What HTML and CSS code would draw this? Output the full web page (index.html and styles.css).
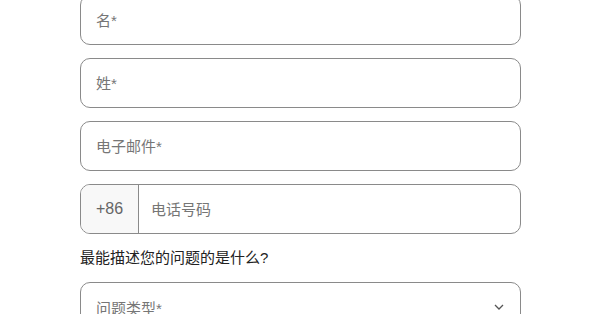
FILE: index.html
```html
<!DOCTYPE html>
<html lang="zh">
<head>
<meta charset="utf-8">
<link rel="stylesheet" href="styles.css">
</head>
<body>
<form class="form">
  <input class="field" type="text" placeholder="名*">
  <input class="field" type="text" placeholder="姓*">
  <input class="field" type="email" placeholder="电子邮件*">
  <div class="phone">
    <span class="prefix">+86</span>
    <input class="phone-input" type="tel" placeholder="电话号码">
  </div>
  <label class="question">最能描述您的问题的是什么?</label>
  <div class="select">
    <span class="select-text">问题类型*</span>
    <svg class="chevron" width="10" height="6" viewBox="0 0 10 6"><path d="M1 1l4 4 4-4" fill="none" stroke="#555" stroke-width="1.3"/></svg>
  </div>
</form>
</body>
</html>
```

FILE: styles.css
```css
html, body {
  margin: 0;
  padding: 0;
  background: #fff;
  overflow: hidden;
}
body {
  font-family: "Liberation Sans", "Noto Sans CJK SC", sans-serif;
  font-size: 15px;
  color: #222;
}
.form {
  width: 441px;
  margin: -5px 0 0 80px;
  display: flex;
  flex-direction: column;
  gap: 13px;
}
.field, .phone, .select {
  box-sizing: border-box;
  height: 50px;
  border: 1px solid #8a8a8a;
  border-radius: 10px;
  background: #fff;
}
.field {
  padding: 0 15px;
  font: inherit;
  color: #222;
  outline: none;
}
.field::placeholder, .phone-input::placeholder {
  color: #767676;
  opacity: 1;
}
.phone {
  display: flex;
  overflow: hidden;
}
.prefix {
  width: 57px;
  flex: none;
  display: flex;
  align-items: center;
  justify-content: center;
  background: #f8f8f8;
  border-right: 1px solid #8a8a8a;
  color: #666;
  font-size: 16px;
}
.phone-input {
  flex: 1;
  border: 0;
  outline: none;
  padding: 0 12px;
  font: inherit;
  background: transparent;
}
.question {
  line-height: 22px;
  color: #222;
}
.select {
  display: flex;
  align-items: center;
  justify-content: space-between;
  padding: 0 15px;
}
.select-text {
  color: #767676;
}
.chevron {
  margin-right: 1px;
}
```
